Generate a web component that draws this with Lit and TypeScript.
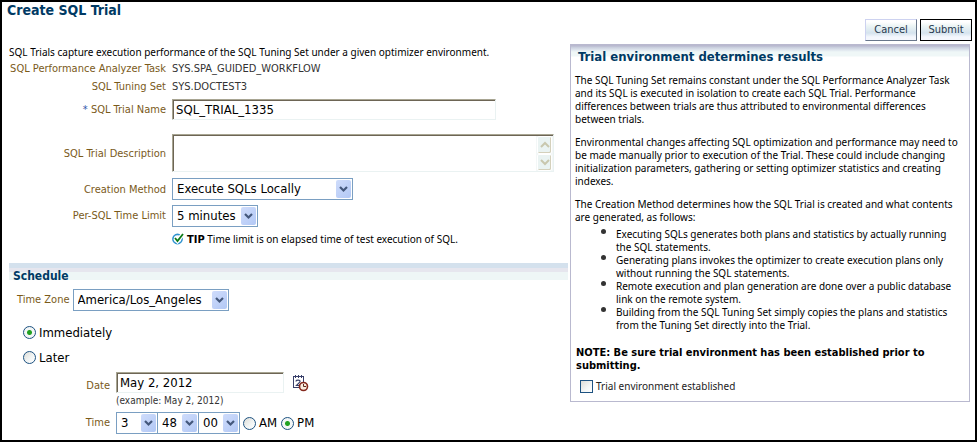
import { LitElement, html, css } from "lit";
import { customElement } from "lit/decorators.js";

const dropDown = (id: string, size: string, options: string[], label: string) => html`
  <span class="drop ${size}">
    <select id=${id} aria-label=${label}>
      ${options.map((o) => html`<option>${o}</option>`)}
    </select>
    <span class="arrow">
      <svg width="9" height="7" aria-hidden="true">
        <path d="M1 1 L4.5 4.5 L8 1" fill="none" stroke="#44587c" stroke-width="2.2" />
      </svg>
    </span>
  </span>
`;

@customElement("app-root")
class AppRoot extends LitElement {
  static styles = css`
    :host {
      display: block;
      box-sizing: border-box;
      min-height: 100vh;
      border: 2px solid #000;
      background: #fff;
      color: #000;
      font: 11px/14px "DejaVu Sans Condensed", "DejaVu Sans", sans-serif;
    }
    * {
      box-sizing: border-box;
    }
    h1,
    h2,
    p,
    ul {
      margin: 0;
    }
    header {
      display: flex;
      justify-content: space-between;
      height: 42px;
      padding: 0 3px 0 5px;
    }
    h1 {
      color: #003a64;
      font-size: 14px;
      line-height: 16px;
    }
    h2 {
      color: #003a64;
      font-size: 13px;
      line-height: 16px;
    }
    .actions {
      display: flex;
      align-items: start;
      gap: 3px;
      padding-top: 17px;
    }
    button {
      font: inherit;
      color: #26384d;
    }
    .action {
      width: 52px;
      height: 22px;
      padding: 0;
      border: 1px solid #cdd2f0;
      border-right-color: #68768a;
      border-bottom-color: #68768a;
      background: linear-gradient(#fff 10%, #ecf5f5 30%, #d5e3ee 65%, #f4f7fd 85%);
    }
    .default {
      border-color: #000;
    }
    .columns {
      display: grid;
      grid-template-columns: minmax(0, 1fr) 400px;
      gap: 2px;
      padding: 0 5px 0 7px;
      align-items: start;
    }
    .intro {
      font-family: "Noto Sans", sans-serif;
      font-size: 10px;
      line-height: 16px;
    }
    .form {
      display: grid;
      grid-template-columns: 157px minmax(0, 1fr);
      column-gap: 6px;
      align-items: center;
      justify-items: start;
    }
    .form > label,
    .form > .caption {
      justify-self: end;
    }
    label,
    .caption {
      color: #7a5a1a;
    }
    .value {
      color: #333;
      line-height: 18px;
    }
    .required {
      color: #3355aa;
    }
    .field {
      height: 21px;
      padding: 0 3px;
      border: 1px solid #eaf2f2;
      border-top-color: #a8a592;
      border-left-color: #a8a592;
      background: #fff;
      box-shadow: inset 1px 1px #6d6555;
      color: #000;
      font-size: 13px;
      font-family: inherit;
    }
    .name {
      width: 324px;
      margin: 3px 0 14px;
    }
    .memo {
      display: flex;
      width: 382px;
      height: 38px;
      padding: 1px 0 0 1px;
      margin-bottom: 6px;
    }
    textarea {
      flex: 1;
      min-width: 0;
      padding: 2px;
      border: 0;
      resize: none;
      overflow: hidden;
      font: inherit;
    }
    .scroll {
      display: grid;
      grid-template-rows: 1fr 1fr;
      width: 17px;
      padding: 0 1px;
      background: #f3f7f7;
    }
    .step {
      display: grid;
      place-items: center;
      padding: 0;
      border: 1px solid #fff;
      border-radius: 2px;
      background: #eaf3f2;
      box-shadow: inset -1px -1px #d4d0bb;
    }
    .label-name {
      margin-bottom: 11px;
    }
    .raised {
      margin-bottom: 4px;
    }
    .drop {
      display: grid;
      height: 22px;
      border: 1px solid #7a9fc2;
      background: #fff;
    }
    select {
      grid-area: 1 / 1;
      appearance: none;
      width: 100%;
      min-width: 0;
      padding: 0 16px 0 4px;
      border: 0;
      background: transparent;
      color: #000;
      font: 13px/20px "DejaVu Sans Condensed", "DejaVu Sans", sans-serif;
    }
    .arrow {
      grid-area: 1 / 1;
      place-self: center end;
      display: grid;
      place-items: center;
      width: 15px;
      height: 18px;
      margin-right: 1px;
      border-radius: 2px;
      background: linear-gradient(135deg, #cfdcfb, #b2c8f5);
      pointer-events: none;
    }
    .method {
      width: 181px;
      margin-bottom: 5px;
    }
    .limit {
      width: 86px;
    }
    .timezone {
      width: 156px;
    }
    .unit {
      width: 42px;
      margin-right: -1px;
    }
    .tip {
      display: flex;
      gap: 3px;
      grid-column: 2;
      padding: 5px 0 16px;
    }
    .tip span {
      font-family: "Noto Sans", sans-serif;
      font-size: 10px;
    }
    .tip b {
      font-family: "DejaVu Sans Condensed", "DejaVu Sans", sans-serif;
      font-size: 11px;
    }
    .section {
      height: 17px;
      padding-left: 4px;
      line-height: 26px;
      font-size: 12px;
      background: linear-gradient(#d4e1ed 5px, #e6e6ee 5px 9px, #eef6f6 9px);
    }
    .zone {
      display: flex;
      align-items: center;
      gap: 3px;
      padding: 9px 0 9px 8px;
    }
    .choice {
      display: flex;
      align-items: center;
      gap: 3px;
      color: #000;
      font-size: 13px;
      line-height: 25px;
    }
    .choice.main {
      margin-left: 14px;
    }
    input[type="radio"],
    input[type="checkbox"] {
      appearance: none;
      flex: none;
      margin: 0;
      width: 13px;
      height: 13px;
      border: 1px solid #1d5281;
      background: linear-gradient(135deg, #dcdcd7, #f3f6f6 60%, #fff);
    }
    input[type="radio"] {
      border-radius: 50%;
    }
    input[type="radio"]:checked {
      background: radial-gradient(circle, #21a121 0 2px, #f3f6f6 3px);
    }
    .when {
      display: grid;
      grid-template-columns: 101px minmax(0, 1fr);
      column-gap: 6px;
      padding-top: 2px;
    }
    .when > label {
      justify-self: end;
      align-self: center;
    }
    .when > .date-label {
      padding-top: 7px;
    }
    .date {
      display: flex;
      align-items: center;
      height: 21px;
      gap: 7px;
    }
    .date .field {
      width: 168px;
    }
    .picker {
      display: grid;
      padding: 0;
      border: 0;
      background: none;
    }
    .hint {
      grid-column: 2;
      color: #333;
      font-size: 10px;
      padding: 1px 0 4px;
    }
    .time {
      display: flex;
      align-items: center;
    }
    .time .choice {
      margin-left: 4px;
      line-height: 22px;
    }
    aside {
      border: 1px solid #b9b9cf;
      border-top: 0;
      padding: 0 0 8px 4px;
      background: linear-gradient(#b9b9cf 2px, #c6cbdb 3px, #dfe6ee 6px, #eff7f7 8px 12px, #fff 13px);
      font-family: "Noto Sans", sans-serif;
      font-size: 10px;
      line-height: 13px;
    }
    aside h2,
    aside strong {
      font-family: "DejaVu Sans Condensed", "DejaVu Sans", sans-serif;
    }
    aside h2 {
      padding: 5px 0 9px 3px;
    }
    aside p {
      margin-bottom: 10px;
    }
    aside p.lead {
      margin-bottom: 4px;
    }
    aside ul {
      padding: 0 0 0 41px;
      margin-bottom: 14px;
      list-style: none;
    }
    li::before {
      content: "";
      float: left;
      width: 5px;
      height: 5px;
      margin: 1px 0 0 -15px;
      border-radius: 50%;
      background: #333;
    }
    aside strong {
      display: block;
      padding-left: 1px;
      font-size: 11px;
    }
    .confirm {
      display: flex;
      align-items: center;
      gap: 3px;
      padding: 8px 0 0 5px;
      color: #222;
    }
  `;

  render() {
    return html`
      <header>
        <h1>Create SQL Trial</h1>
        <div class="actions">
          <button class="action" type="button">Cancel</button>
          <button class="action default" type="submit">Submit</button>
        </div>
      </header>
      <div class="columns">
        <main>
          <p class="intro">
            SQL Trials capture execution performance of the SQL Tuning Set under a given optimizer
            environment.
          </p>
          <div class="form">
            <span class="caption">SQL Performance Analyzer Task</span>
            <span class="value">SYS.SPA_GUIDED_WORKFLOW</span>
            <span class="caption">SQL Tuning Set</span>
            <span class="value">SYS.DOCTEST3</span>
            <label class="label-name" for="name"><span class="required">*</span> SQL Trial Name</label>
            <input class="field name" id="name" value="SQL_TRIAL_1335" />
            <label class="raised" for="description">SQL Trial Description</label>
            <div class="field memo">
              <textarea id="description"></textarea>
              <div class="scroll">
                <button class="step" type="button" aria-label="Scroll up">
                  <svg width="10" height="7"><path d="M1 6 L5 2 L9 6" fill="none" stroke="#c9c7ae" stroke-width="2" /></svg>
                </button>
                <button class="step" type="button" aria-label="Scroll down">
                  <svg width="10" height="7"><path d="M1 1 L5 5 L9 1" fill="none" stroke="#c9c7ae" stroke-width="2" /></svg>
                </button>
              </div>
            </div>
            <label class="raised" for="method">Creation Method</label>
            ${dropDown("method", "method", ["Execute SQLs Locally"], "Creation Method")}
            <label for="limit">Per-SQL Time Limit</label>
            ${dropDown("limit", "limit", ["5 minutes"], "Per-SQL Time Limit")}
            <p class="tip">
              <svg width="12" height="13" viewBox="0 0 12 13" aria-hidden="true">
                <circle cx="5.5" cy="7" r="4.6" fill="#fff" stroke="#2f93cf" stroke-width="1.6" />
                <path d="M3 6 L5.5 9 L11 2" fill="none" stroke="#fff" stroke-width="4" />
                <path d="M3 6 L5.5 9 L11 2" fill="none" stroke="#0b7a16" stroke-width="1.8" />
              </svg>
              <span><b>TIP</b> Time limit is on elapsed time of test execution of SQL.</span>
            </p>
          </div>
          <h2 class="section">Schedule</h2>
          <div class="zone">
            <label for="zone">Time Zone</label>
            ${dropDown("zone", "timezone", ["America/Los_Angeles"], "Time Zone")}
          </div>
          <label class="choice main"><input type="radio" name="start" checked />Immediately</label>
          <label class="choice main"><input type="radio" name="start" />Later</label>
          <div class="when">
            <label class="date-label" for="date">Date</label>
            <div class="date">
              <input class="field" id="date" value="May 2, 2012" />
              <button class="picker" type="button" aria-label="Pick a date">
                <svg width="18" height="18" viewBox="0 0 18 18">
                  <rect x="2.5" y="2.5" width="10" height="11" fill="#fff" stroke="#39406a" />
                  <path d="M4.5 1v3M7.5 1v3M10.5 1v3" stroke="#39406a" />
                  <path d="M5 7.5 C5 5.5 9.5 5.5 9 7.8 L5.5 11.5 H9" fill="none" stroke="#39406a" stroke-width="1.2" />
                  <circle cx="12.5" cy="12.5" r="4" fill="#f9ecdf" stroke="#84281d" stroke-width="1.6" />
                  <path d="M12.5 10 V12.5 H15" fill="none" stroke="#5d2a1d" />
                </svg>
              </button>
            </div>
            <span class="hint">(example: May 2, 2012)</span>
            <label for="hour">Time</label>
            <div class="time">
              ${dropDown("hour", "unit", ["3"], "Hour")}
              ${dropDown("minute", "unit", ["48"], "Minute")}
              ${dropDown("second", "unit", ["00"], "Second")}
              <label class="choice"><input type="radio" name="half" />AM</label>
              <label class="choice"><input type="radio" name="half" checked />PM</label>
            </div>
          </div>
        </main>
        <aside>
          <h2>Trial environment determines results</h2>
          <p>
            The SQL Tuning Set remains constant under the SQL Performance Analyzer Task<br />
            and its SQL is executed in isolation to create each SQL Trial. Performance<br />
            differences between trials are thus attributed to environmental differences<br />
            between trials.
          </p>
          <p>
            Environmental changes affecting SQL optimization and performance may need to<br />
            be made manually prior to execution of the Trial. These could include changing<br />
            initialization parameters, gathering or setting optimizer statistics and creating<br />
            indexes.
          </p>
          <p class="lead">
            The Creation Method determines how the SQL Trial is created and what contents<br />
            are generated, as follows:
          </p>
          <ul>
            <li>Executing SQLs generates both plans and statistics by actually running<br />the SQL statements.</li>
            <li>Generating plans invokes the optimizer to create execution plans only<br />without running the SQL statements.</li>
            <li>Remote execution and plan generation are done over a public database<br />link on the remote system.</li>
            <li>Building from the SQL Tuning Set simply copies the plans and statistics<br />from the Tuning Set directly into the Trial.</li>
          </ul>
          <strong>NOTE: Be sure trial environment has been established prior to<br />submitting.</strong>
          <label class="confirm"><input type="checkbox" />Trial environment established</label>
        </aside>
      </div>
    `;
  }
}
